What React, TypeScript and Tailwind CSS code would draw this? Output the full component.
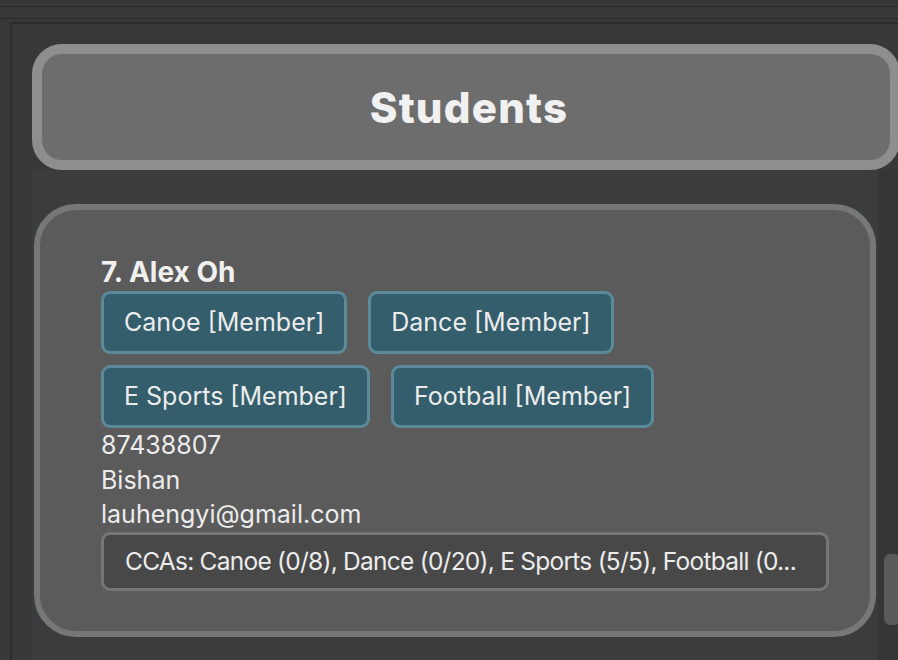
import React from 'react';

const tags = ['Canoe [Member]', 'Dance [Member]', 'E Sports [Member]', 'Football [Member]'];

function Tag({ label }: { label: string }) {
  return (
    <div className="h-[63px] flex items-center px-[20px] rounded-[9px] border-[3px] border-[#5b8a9b] bg-[#345e6c] text-[25px] leading-none text-[#ececec]">
      {label}
    </div>
  );
}

export default function App() {
  return (
    <div
      className="w-[898px] h-[660px] overflow-hidden bg-[#383838] flex flex-col"
      style={{ fontFamily: 'Inter, "Noto Sans", sans-serif' }}
    >
      {/* window chrome lines */}
      <div className="h-[6px] shrink-0" />
      <div className="h-[1px] bg-[#2a2a2a] shrink-0" />
      <div className="h-[11px] shrink-0" />
      <div className="h-[1px] bg-[#2a2a2a] shrink-0" />
      <div className="h-[3px] shrink-0" />

      <div className="flex flex-1 min-h-0">
        <div className="w-[10px] shrink-0" />
        <div className="flex-1 flex flex-col border-l-2 border-t-2 border-[#2c2c2c] pl-[20px] pt-[20px] min-w-0">
          {/* title bar */}
          <div className="w-[868px] shrink-0 h-[126px] rounded-[30px] border-[10px] border-[#8e8e8e] bg-[#6d6d6d] flex items-center justify-center">
            <span className="text-[42px] font-extrabold text-[#f1f1f1] tracking-[1.2px] ml-[6px]">Students</span>
          </div>

          <div className="flex flex-1 min-h-0">
            {/* list */}
            <div className="w-[846px] shrink-0 bg-[#3b3c3e] pl-[2px] pt-[34px]">
              <div className="w-[842px] h-[433px] rounded-[42px] border-[6px] border-[#777777] bg-[#5b5b5b] pl-[61px] pr-[41px] pt-[49px]">
                <div className="text-[28px] font-bold leading-[27px] text-[#f0f0f0]">7. Alex Oh</div>
                <div className="mt-[5px] flex flex-wrap gap-x-[21px] gap-y-[11px] w-[600px]">
                  {tags.map((t) => (
                    <Tag key={t} label={t} />
                  ))}
                </div>
                <div className="text-[25px] leading-[34.5px] text-[#ececec]">
                  <div>87438807</div>
                  <div>Bishan</div>
                  <div>lauhengyi@gmail.com</div>
                </div>
                <div className="h-[59px] rounded-[9px] border-[3px] border-[#767676] bg-[#484848] flex items-center pl-[21px] pr-[12px] overflow-hidden whitespace-nowrap text-[24.5px] tracking-[-0.75px] leading-none text-[#ececec]">
                  CCAs: Canoe (0/8), Dance (0/20), E Sports (5/5), Football (0...
                </div>
              </div>
            </div>
            {/* scrollbar */}
            <div className="flex-1 bg-[#363636] pl-[6px] pt-[384px]">
              <div className="w-[16px] h-[71px] rounded-[6px] bg-[#5a5a5a]" />
            </div>
          </div>
        </div>
      </div>
    </div>
  );
}
